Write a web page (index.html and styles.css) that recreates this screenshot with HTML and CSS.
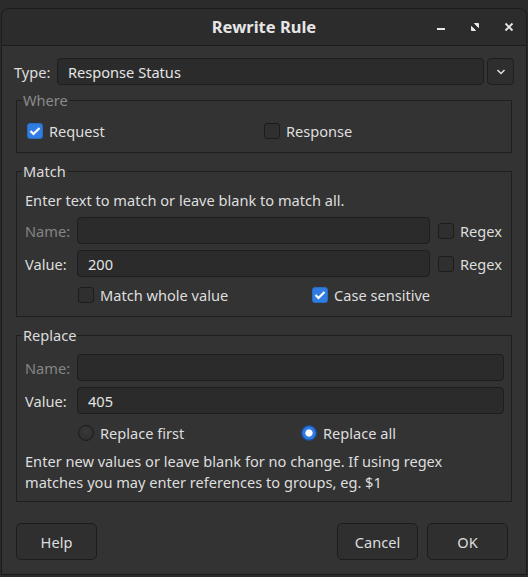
FILE: index.html
```html
<!DOCTYPE html>
<html>
<head>
<meta charset="utf-8">
<link rel="stylesheet" href="styles.css">
</head>
<body>
<div class="window">
  <div class="titlebar">
    <div class="title">Rewrite Rule</div>
    <div class="wctl">
      <svg width="10" height="10" viewBox="0 0 10 10"><rect x="1" y="6" width="8" height="2" fill="#e8e8e8"/></svg>
      <svg width="10" height="10" viewBox="0 0 10 10"><path d="M4.5 1.5H8.5V5.5Z M5.5 8.5H1.5V4.5Z" fill="#e8e8e8" stroke="#e8e8e8" stroke-width="1" stroke-linejoin="round"/></svg>
      <svg width="10" height="10" viewBox="0 0 10 10"><path d="M1.5 1.5L8.5 8.5M8.5 1.5L1.5 8.5" stroke="#e8e8e8" stroke-width="1.8"/></svg>
    </div>
  </div>
  <div class="content">
    <div class="type-row">
      <span class="lbl">Type:</span>
      <div class="combo">Response Status</div>
      <div class="combo-btn"><svg width="10" height="6" viewBox="0 0 10 6"><path d="M1.5 1L5 4.5 8.5 1" stroke="#e0e0e0" stroke-width="1.5" fill="none"/></svg></div>
    </div>

    <fieldset class="group where">
      <legend class="dim">Where</legend>
      <div class="where-row">
        <label class="chk"><span class="box on"><svg width="12" height="10" viewBox="0 0 12 10"><path d="M1.5 5L4.5 8 10.5 2" stroke="#fff" stroke-width="2.2" fill="none"/></svg></span>Request</label>
        <label class="chk"><span class="box"></span>Response</label>
      </div>
    </fieldset>

    <fieldset class="group match">
      <legend>Match</legend>
      <p class="note">Enter text to match or leave blank to match all.</p>
      <div class="grid3">
        <span class="lbl dim">Name:</span>
        <div class="input"></div>
        <label class="chk"><span class="box"></span>Regex</label>
        <span class="lbl">Value:</span>
        <div class="input">200</div>
        <label class="chk"><span class="box"></span>Regex</label>
      </div>
      <div class="opts">
        <label class="chk opt1"><span class="box"></span>Match whole value</label>
        <label class="chk"><span class="box on"><svg width="12" height="10" viewBox="0 0 12 10"><path d="M1.5 5L4.5 8 10.5 2" stroke="#fff" stroke-width="2.2" fill="none"/></svg></span>Case sensitive</label>
      </div>
    </fieldset>

    <fieldset class="group replace">
      <legend>Replace</legend>
      <div class="grid2">
        <span class="lbl dim">Name:</span>
        <div class="input"></div>
        <span class="lbl">Value:</span>
        <div class="input">405</div>
      </div>
      <div class="opts ropts">
        <label class="chk opt1"><span class="radio"></span>Replace first</label>
        <label class="chk"><span class="radio on"></span>Replace all</label>
      </div>
      <p class="note note2">Enter new values or leave blank for no change. If using regex matches you may enter references to groups, eg. $1</p>
    </fieldset>

    <div class="buttons">
      <button class="btn">Help</button>
      <span class="spacer"></span>
      <button class="btn">Cancel</button>
      <button class="btn">OK</button>
    </div>
  </div>
</div>
</body>
</html>
```

FILE: styles.css
```css
* { box-sizing: border-box; }
html, body { margin: 0; padding: 0; }
body {
  background: #2b2b2b;
  font-family: "Noto Sans", "Open Sans", sans-serif;
  font-size: 14.6px;
  color: #dedede;
  width: 528px;
  height: 577px;
  overflow: hidden;
}
.window {
  margin: 8px 0 0 1px;
  width: 526px;
  height: 567px;
  background: #333333;
  border: 1px solid #1b1b1b;
  border-radius: 8px 8px 0 0;
  overflow: hidden;
}
.titlebar {
  height: 37px;
  background: #2c2c2c;
  border-bottom: 1px solid #1c1c1c;
  position: relative;
  display: flex;
  align-items: center;
  justify-content: center;
}
.title {
  font-weight: bold;
  font-size: 16.5px;
  color: #e6e6e6;
  margin-top: -1px;
}
.wctl {
  position: absolute;
  right: 12px;
  top: 0;
  height: 36px;
  display: flex;
  align-items: center;
  gap: 24px;
}
.wctl svg { display: block; }
.content {
  padding: 12px 12px 0 12px;
}
.type-row {
  display: flex;
  align-items: center;
  height: 27px;
}
.type-row .lbl { width: 43px; }
.combo {
  flex: 1;
  height: 27px;
  background: #2b2b2b;
  border: 1px solid #1e1e1e;
  border-radius: 4px;
  padding: 0 0 0 10px;
  display: flex;
  align-items: center;
  color: #e4e4e4;
}
.combo-btn {
  width: 27px;
  height: 27px;
  margin-left: 3px;
  background: #2e2e2e;
  border: 1px solid #1e1e1e;
  border-radius: 4px;
  display: flex;
  align-items: center;
  justify-content: center;
}
.group {
  margin: 0 2px;
  border: 1px solid #1f1f1f;
  border-radius: 0;
  padding: 0 7px 0 8px;
  min-width: 0;
}
.group legend {
  padding: 0 1px;
  margin-left: -3px;
  line-height: 19px;
  color: #dcdcdc;
}
.group legend.dim { color: #8a8a8a; }
.dim { color: #858585; }
.where { margin-top: 6px; height: 62px; }
.where-row {
  display: flex;
  align-items: center;
  height: 32px;
  margin-top: 5px;
  padding-left: 2px;
}
.where-row .chk { width: 237px; }
.chk {
  display: flex;
  align-items: center;
  gap: 6px;
  white-space: nowrap;
}
.box {
  width: 16px;
  height: 16px;
  border-radius: 3px;
  border: 1px solid #1c1c1c;
  background: #2f2f2f;
  display: flex;
  align-items: center;
  justify-content: center;
  flex: none;
}
.box.on {
  background: #2f7de3;
  border-color: #2a6bc4;
}
.radio {
  width: 16px;
  height: 16px;
  border-radius: 50%;
  border: 1px solid #1c1c1c;
  background: radial-gradient(circle at 50% 40%, #3a3a3a, #2a2a2a);
  flex: none;
}
.radio.on {
  background: radial-gradient(circle, #ffffff 0 3.2px, #2f7de3 4px 6px, #1a56b0 7px);
  border-color: #1a4f9e;
}
.match { margin-top: 9px; height: 155px; padding-top: 9px; }
.note {
  margin: 0;
  line-height: 21px;
}
.grid3 {
  display: grid;
  grid-template-columns: 52px 1fr auto;
  row-gap: 6px;
  align-items: center;
  margin-top: 6px;
}
.grid3 .chk { margin-left: 8px; margin-right: 2px; }
.grid2 {
  display: grid;
  grid-template-columns: 52px 1fr;
  row-gap: 6px;
  align-items: center;
}
.input {
  height: 27px;
  background: #2b2b2b;
  border: 1px solid #1e1e1e;
  border-radius: 4px;
  padding-left: 10px;
  display: flex;
  align-items: center;
  color: #e4e4e4;
}
.opts {
  display: flex;
  align-items: center;
  height: 16px;
  margin-top: 10px;
  padding-left: 53px;
}
.opt1 { width: 234px; }
.replace { margin-top: 9px; height: 176px; padding-top: 9px; }
.ropts { margin-top: 11px; }
.ropts .opt1 { width: 223px; }
.note2 { margin-top: 10px; }
.buttons {
  display: flex;
  margin-top: 21px;
  padding: 0 6px 0 2px;
  gap: 9px;
}
.spacer { flex: 1; }
.btn {
  width: 81px;
  height: 37px;
  background: #2f2f2f;
  border: 1px solid #1c1c1c;
  border-radius: 5px;
  font-family: inherit;
  font-size: 14.6px;
  color: #dedede;
  padding: 0;
}
```
